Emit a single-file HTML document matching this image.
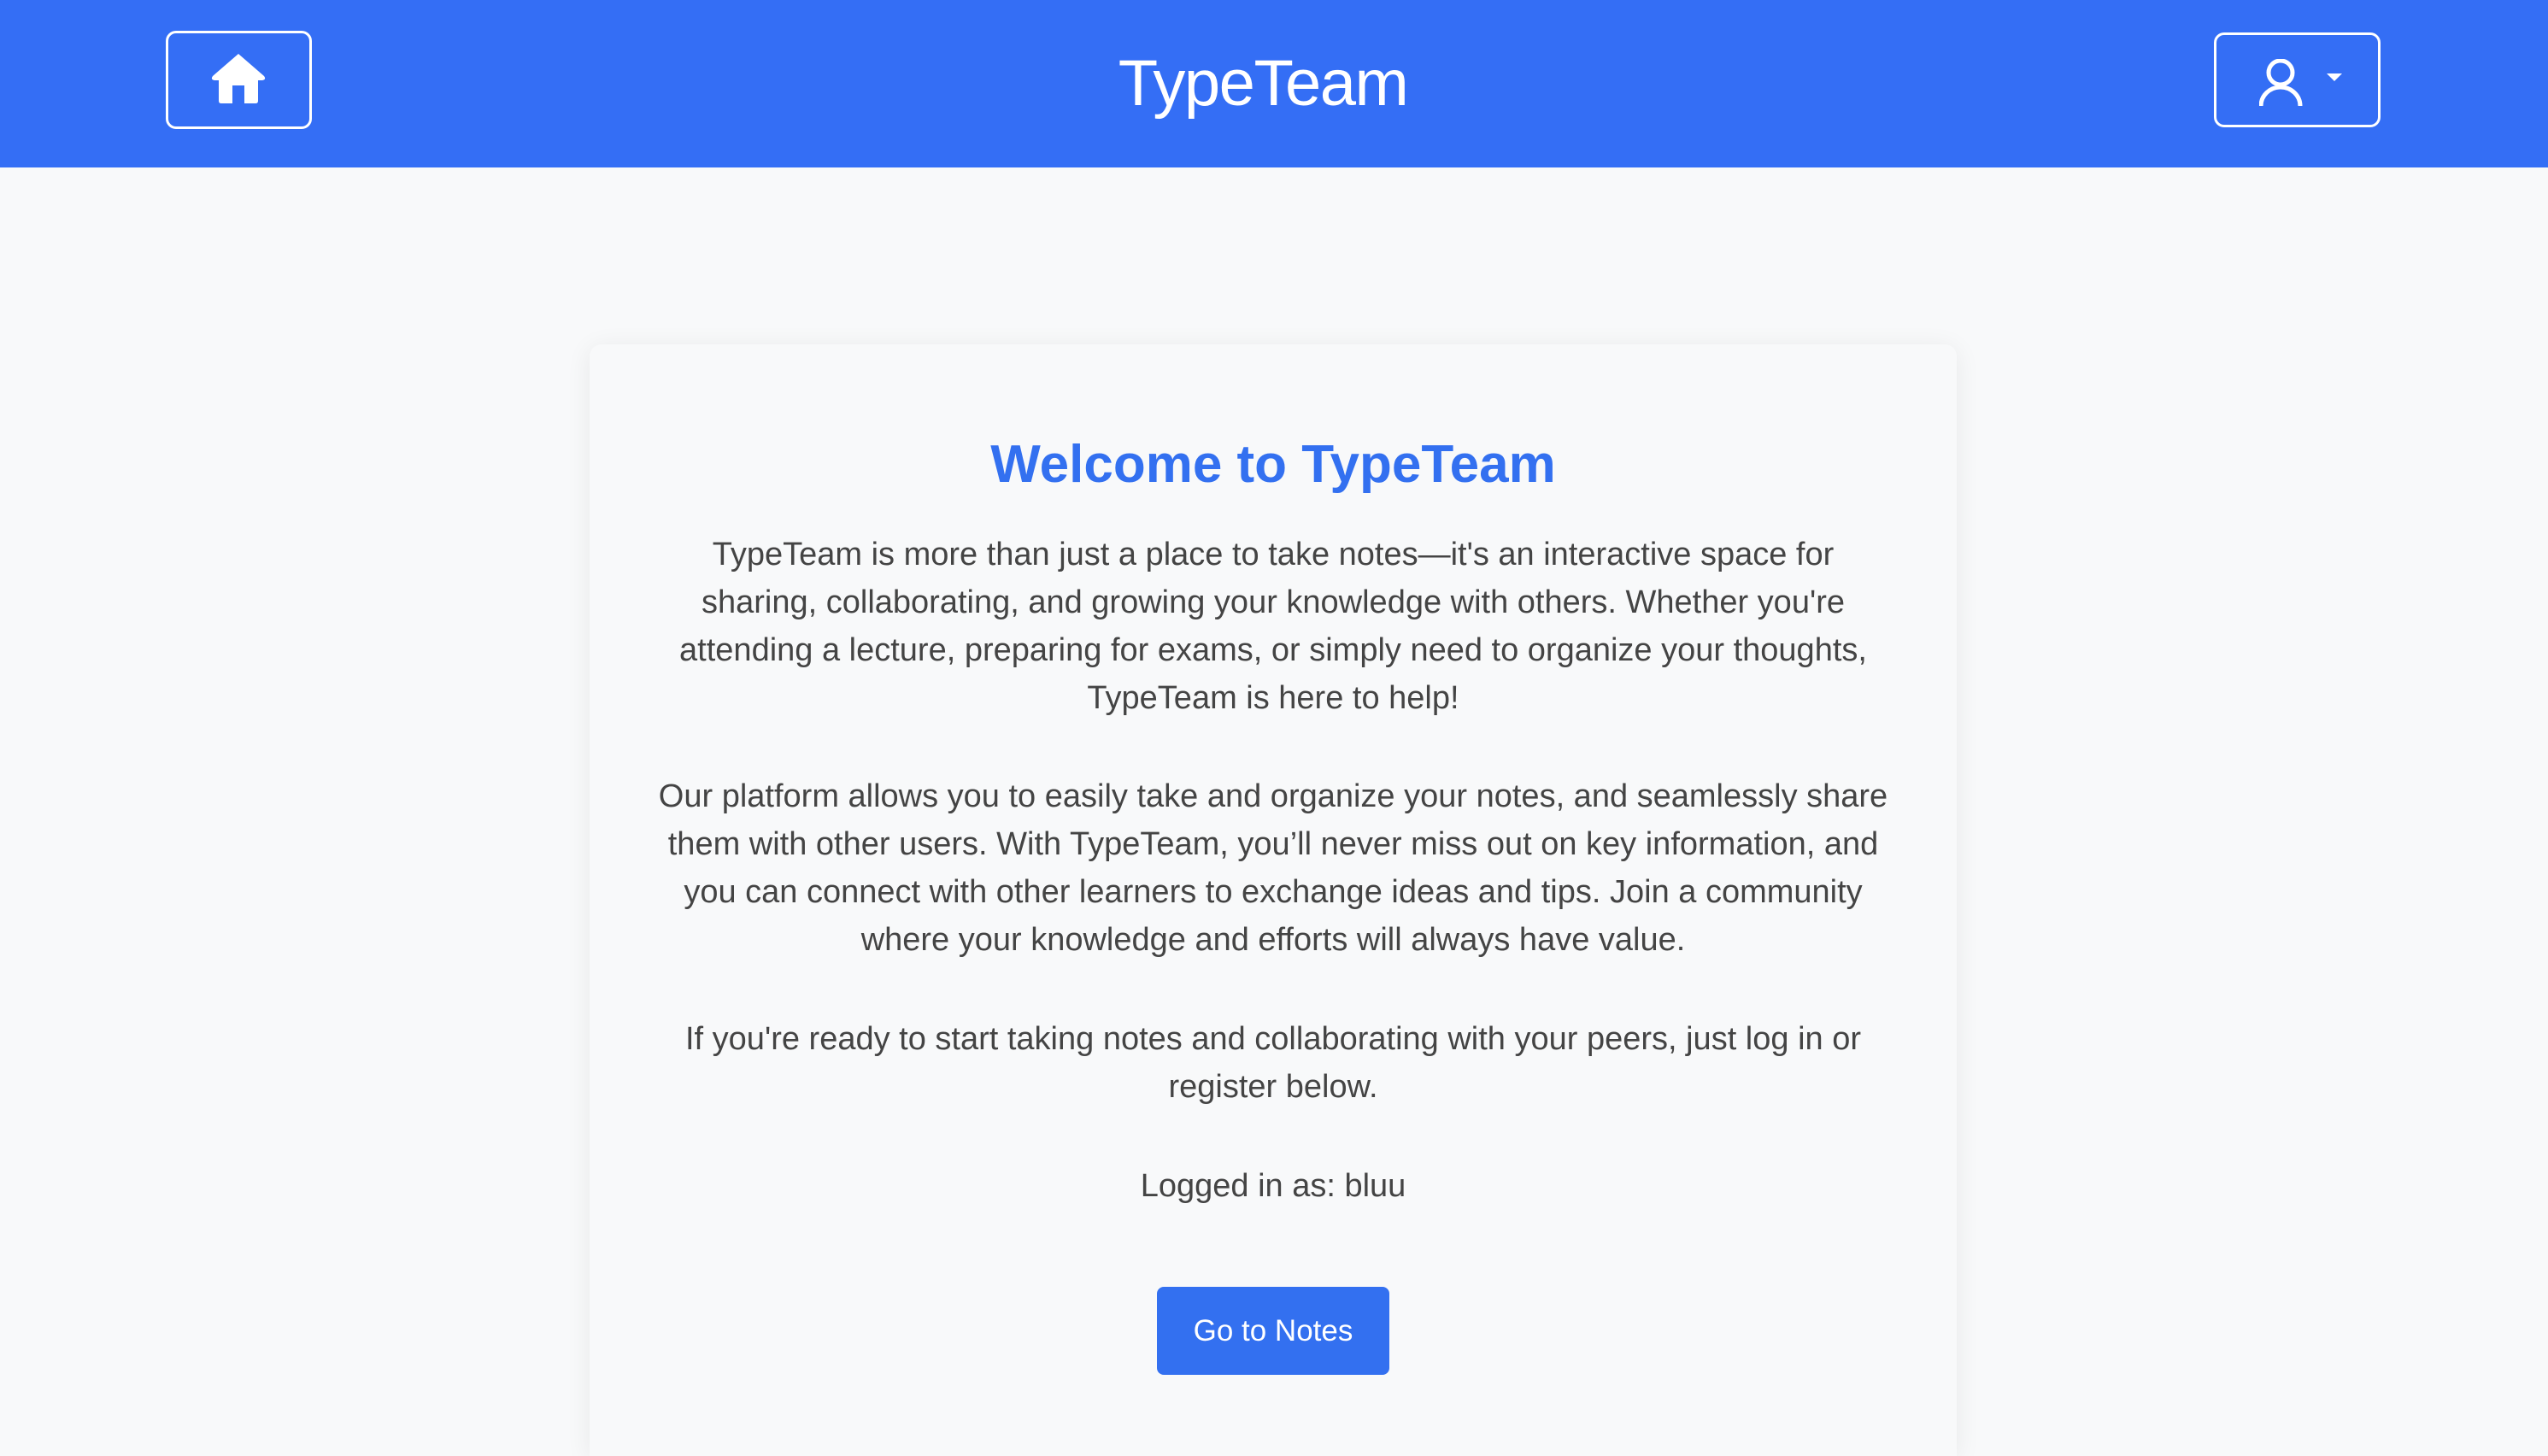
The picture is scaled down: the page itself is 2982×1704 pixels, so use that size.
<!DOCTYPE html>
<html><head><meta charset="utf-8"><style>
html,body{margin:0;padding:0;width:2982px;height:1704px;overflow:hidden;background:#f8f9fa;font-family:"Liberation Sans",sans-serif;}
.hdr{position:absolute;left:0;top:0;width:2982px;height:196px;background:#346ef5;}
.btn1{position:absolute;left:194px;top:36px;width:171px;height:115px;border:3px solid #fff;border-radius:12px;box-sizing:border-box;}
.btn2{position:absolute;left:2591px;top:38px;width:195px;height:111px;border:3px solid #fff;border-radius:12px;box-sizing:border-box;}
.title{position:absolute;left:-13px;width:2982px;top:48px;text-align:center;color:#fff;font-size:76px;line-height:100px;letter-spacing:-1.5px;}
.card{position:absolute;left:690px;top:403px;width:1600px;height:1301px;background:#f8f9fa;border-radius:14px 14px 0 0;box-shadow:0 4px 30px rgba(0,0,0,0.07);box-sizing:border-box;padding:102px 40px 0;text-align:center;}
h1{margin:0;font-size:62px;line-height:78px;color:#3370f0;font-weight:bold;}
p{margin:0;color:#444;font-size:38px;line-height:56px;}
.go{position:absolute;left:664px;top:1103px;width:272px;height:103px;background:#3370f0;color:#fff;border-radius:8px;font-size:35px;line-height:103px;text-align:center;}
</style></head><body>
<div class="hdr">
<div class="btn1"><svg style="position:absolute;left:48px;top:22px" width="68" height="62" viewBox="0 0 68 62"><path d="M34 2 L4 28 Q1 32 6 33 L11 33 L11 57 Q11 60 14 60 L27 60 L27 39 L41 39 L41 60 L54 60 Q57 60 57 57 L57 33 L62 33 Q67 32 64 28 Z" fill="#fff"/></svg></div>
<div class="title">TypeTeam</div>
<div class="btn2"><svg style="position:absolute;left:50px;top:28px" width="100" height="56" viewBox="0 0 100 56"><circle cx="25" cy="16" r="14" fill="none" stroke="#fff" stroke-width="5"/><path d="M2 55 A23 22 0 0 1 48 55" fill="none" stroke="#fff" stroke-width="5"/><path d="M79 17 L97 17 L88 26 Z" fill="#fff"/></svg></div>
</div>
<div class="card">
<h1>Welcome to TypeTeam</h1>
<p style="margin-top:38px">TypeTeam is more than just a place to take notes—it's an interactive space for<br>sharing, collaborating, and growing your knowledge with others. Whether you're<br>attending a lecture, preparing for exams, or simply need to organize your thoughts,<br>TypeTeam is here to help!</p>
<p style="margin-top:59px">Our platform allows you to easily take and organize your notes, and seamlessly share<br>them with other users. With TypeTeam, you’ll never miss out on key information, and<br>you can connect with other learners to exchange ideas and tips. Join a community<br>where your knowledge and efforts will always have value.</p>
<p style="margin-top:60px">If you're ready to start taking notes and collaborating with your peers, just log in or<br>register below.</p>
<p style="margin-top:60px">Logged in as: bluu</p>
<div class="go">Go to Notes</div>
</div>
</body></html>
